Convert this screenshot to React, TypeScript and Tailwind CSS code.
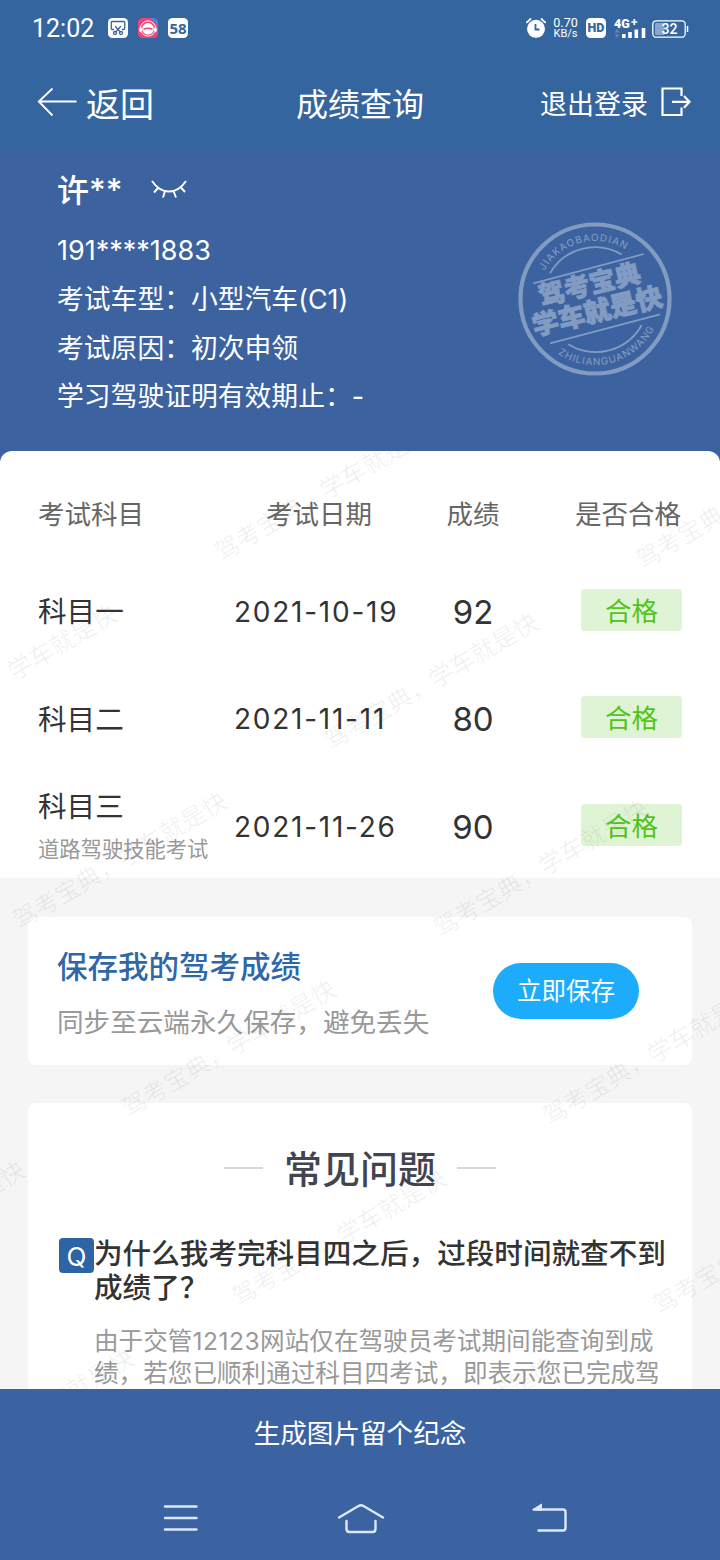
import React from "react";

const infoRows = ["考试车型：小型汽车(C1)", "考试原因：初次申领", "学习驾驶证明有效期止：-"];

const exams = [
  { subject: "科目一", note: "", date: "2021-10-19", score: "92", result: "合格" },
  { subject: "科目二", note: "", date: "2021-11-11", score: "80", result: "合格" },
  { subject: "科目三", note: "道路驾驶技能考试", date: "2021-11-26", score: "90", result: "合格" },
];

// centre of the first character of every watermark, relative to the content area
const marks = [
  [227, 97], [648, 105],
  [-85, 278], [336, 286],
  [25, 465], [446, 473],
  [134, 653], [555, 661],
  [-177, 834], [244, 842], [665, 850],
  [-68, 1022], [353, 1030],
];

const StatusBar = () => (
  <div className="h-[56px] flex items-center justify-between pl-8 pr-[31px] text-white">
    <div className="flex items-center">
      <span className="w-[76px] text-[25px] leading-none font-['Roboto']">12:02</span>
      <svg width="20" height="20" viewBox="0 0 20 20">
        <rect width="20" height="20" rx="4.5" fill="#fff" />
        <g fill="none" stroke="#35659f" strokeWidth="1.3">
          <path d="M6 11.5H4.2a.9.9 0 0 1-.9-.9V4.4a.9.9 0 0 1 .9-.9h11.6a.9.9 0 0 1 .9.9v6.2a.9.9 0 0 1-.9.9H14" />
          <path d="M7.2 8.3L12.3 14M12.8 8.3L7.7 14" />
          <circle cx="7" cy="15" r="1.5" />
          <circle cx="13" cy="15" r="1.5" />
        </g>
      </svg>
      <svg className="ml-[10px]" width="20" height="20" viewBox="0 0 20 20">
        <rect width="20" height="20" rx="4.5" fill="#ee4479" />
        <path d="M13 0h2.5A4.5 4.5 0 0 1 20 4.5V7z" fill="#2f8fe0" />
        <circle cx="10" cy="10.5" r="7.6" fill="none" stroke="#fff" strokeWidth="1" />
        <circle cx="10" cy="10.8" r="5.8" fill="#fff" />
        <path d="M5.5 11.2q4.5-1.8 9 0" fill="none" stroke="#ee4479" strokeWidth="1.5" />
        <rect x="1.2" y="9.5" width="2.8" height="4.5" rx="1.4" fill="#fff" />
        <rect x="16" y="9.5" width="2.8" height="4.5" rx="1.4" fill="#fff" />
      </svg>
      <span className="ml-[10px] w-5 h-5 flex items-center justify-center rounded-[4.5px] bg-white text-[#35659f] text-[15px] leading-5 font-bold font-['Noto_Sans']">58</span>
    </div>
    <div className="flex items-center">
      <svg width="20" height="20" viewBox="0 0 20 20">
        <circle cx="10" cy="10.8" r="9" fill="#fff" />
        <path d="M.8 4.3L4.5 1M19.2 4.3L15.5 1" stroke="#fff" strokeWidth="1.8" strokeLinecap="round" />
        <path d="M9.5 6v5.5h4" fill="none" stroke="#35659f" strokeWidth="1.8" />
      </svg>
      <div className="ml-[6px] w-[27px] text-[12.5px] leading-[11px] text-center font-['Roboto'] whitespace-nowrap">
        <div>0.70</div>
        <div className="text-[11px]">KB/s</div>
      </div>
      <span className="ml-[7px] w-5 h-5 flex items-center justify-center rounded-[4.5px] bg-white text-[#35659f] text-[12.5px] leading-5 font-black font-['Roboto']">HD</span>
      <svg className="ml-2" width="32" height="21" viewBox="0 0 32 21">
        <text x="0" y="10" fontSize="12.5" fontWeight="900" fill="#fff" fontFamily="Roboto">4G</text>
        <path d="M17.3 4h6M20.3 1v6" stroke="#fff" strokeWidth="1.7" />
        <path d="M.5 14.5L3 11l2.5 3.5zM.5 16.5L3 20l2.5-3.5z" fill="#6688b5" />
        <path d="M9.8 20v-4M16 20v-6M22.3 20v-8.5M29.5 20V10" stroke="#fff" strokeWidth="3.6" />
      </svg>
      <svg className="ml-[6px] mt-[1px]" width="37" height="18" viewBox="0 0 37 18">
        <rect x=".8" y=".8" width="32.4" height="16.4" rx="3.5" fill="none" stroke="#fff" strokeWidth="1.3" />
        <rect x="3" y="3" width="9.5" height="12" rx="1" fill="#8ba6ca" />
        <path d="M35.5 6v6" stroke="#fff" strokeWidth="1.5" />
        <text x="17.5" y="14" fontSize="14" fontWeight="500" textAnchor="middle" fill="#fff" fontFamily="Roboto">32</text>
      </svg>
    </div>
  </div>
);

const Header = () => (
  <header className="h-[93px] grid grid-cols-[1fr_auto_1fr] items-center px-[29px] text-white">
    <button className="pl-2 flex items-center">
      <svg className="-mt-[2px]" width="40" height="30" viewBox="0 0 40 30" fill="none" stroke="#fff" strokeWidth="1.8">
        <path d="M15.5 1.5L1.8 14.5L15.5 28.5M1.8 14.5H39.5" />
      </svg>
      <span className="mt-[4px] ml-[9px] text-[34px] leading-none">返回</span>
    </button>
    <h1 className="mt-[4px] text-[32px] leading-none font-normal">成绩查询</h1>
    <button className="flex items-center justify-end text-[27px] leading-none">
      <span className="mt-[4px]">退出登录</span>
      <svg className="ml-3 -mt-[2px]" width="31" height="30" viewBox="0 0 31 30" fill="none" stroke="#fff" strokeWidth="2.2">
        <path d="M21.5 9V1.5H2.5v26.5H21.5V20.5M12 14.8H29.5M24 9l5.5 5.8l-5.5 6" />
      </svg>
    </button>
  </header>
);

const Stamp = () => (
  <svg width="156" height="156" viewBox="0 0 156 156" opacity=".36" fontFamily="'Noto Sans CJK SC', sans-serif">
    <defs>
      <path id="stamp-top" d="M27.5 49.6A58 58 0 0 1 124.4 43.2" />
      <path id="stamp-bottom" d="M41 132.8A66 66 0 0 0 140.7 98.5" />
    </defs>
    <circle cx="78" cy="78" r="74.5" fill="none" stroke="#fff" strokeWidth="4.2" />
    <g fill="none" stroke="#fff" strokeWidth="1.8">
      <path d="M33 52.3A52 52 0 0 1 104.7 33.5" />
      <path d="M51.3 123.3A52.5 52.5 0 0 0 124.7 104" />
      <path d="M16.3 62.3L127 33M33 122.3L143 93.3" />
    </g>
    <g fill="#fff" fontSize="9.8" fontFamily="Inter, sans-serif">
      <text textLength="93"><textPath href="#stamp-top" textLength="93">JIAKAOBAODIAN</textPath></text>
      <text textLength="112"><textPath href="#stamp-bottom" textLength="112">ZHILIANGUANWANG</textPath></text>
    </g>
    <g fill="#fff" stroke="#fff" strokeWidth=".7" fontWeight="900" textAnchor="middle">
      <text transform="translate(72.5 63.3) rotate(-13.5)" y="9.5" fontSize="26">驾考宝典</text>
      <text transform="translate(80.2 90.2) rotate(-13.5)" y="9.5" fontSize="26.6">学车就是快</text>
    </g>
  </svg>
);

const Profile = () => (
  <section className="h-[302px] flex justify-between pl-[57px] pr-[47px] bg-[#3c63a0] text-white">
    <div className="pt-[22px]">
      <div className="flex items-center h-10">
        <span className="w-[94px] text-[32px] leading-10 font-medium">许**</span>
        <svg className="mb-[4px]" width="36" height="20" viewBox="0 0 36 20" fill="none" stroke="#fff" strokeWidth="1.9">
          <path d="M1 2Q8 12.5 18 12.5T35 2M7.5 8.5L3 13.5M14 12L12 18.5M22.5 12L25 18.5M29.5 8L34 13" />
        </svg>
      </div>
      <div className="mt-[15px] text-[27px] leading-[49px]">191****1883</div>
      {infoRows.map((row) => (
        <div key={row} className="text-[26.8px] leading-[48.5px]">{row}</div>
      ))}
    </div>
    <div className="pt-[72px]">
      <Stamp />
    </div>
  </section>
);

const ScoreTable = () => (
  <section className="h-[427px] rounded-t-[12px] bg-white">
    <div className="h-[107px] pt-[21px] flex items-center text-[26.5px] text-[#666]">
      <div className="w-[234px] pl-[38px]">考试科目</div>
      <div className="w-[170px] text-center">考试日期</div>
      <div className="w-[138px] text-center">成绩</div>
      <div className="flex-1 text-right pr-[39px]">是否合格</div>
    </div>
    {exams.map((exam) => (
      <div key={exam.subject} className="h-[107.5px] flex items-center text-[#333]">
        <div className="w-[234px] pl-[38px] pt-[1px]">
          <div className="text-[28.6px] leading-[40px]">{exam.subject}</div>
          {exam.note && <div className="pt-1 text-[21.3px] leading-[36px] text-[#999] whitespace-nowrap">{exam.note}</div>}
        </div>
        <div className="w-[170px] text-[28px] tracking-[1.75px] whitespace-nowrap">{exam.date}</div>
        <div className="w-[138px] pt-[1px] text-center text-[33px]">{exam.score}</div>
        <div className="flex-1 flex justify-end pr-[38px] pb-1">
          <span className="w-[101px] h-[42px] rounded bg-[#dff4d4] text-[26.5px] leading-[44px] text-center text-[#52c41a]">
            {exam.result}
          </span>
        </div>
      </div>
    ))}
  </section>
);

const SaveCard = () => (
  <section className="mx-[28px] mt-[39px] h-[148px] pl-[29px] pr-[53px] flex items-center justify-between rounded-lg bg-white">
    <div className="pt-[3px]">
      <h2 className="text-[30.5px] leading-[44px] font-medium text-[#2f67a8]">保存我的驾考成绩</h2>
      <p className="mt-[14px] text-[26.6px] leading-[38px] text-[#999]">同步至云端永久保存，避免丢失</p>
    </div>
    <button className="w-[146px] h-[56px] pt-[1px] rounded-full bg-[#1dacfc] text-[24.5px] text-white">立即保存</button>
  </section>
);

const Faq = () => (
  <section className="mx-[28px] mt-[38px] rounded-t-lg bg-white">
    <div className="pt-[38px] flex items-center justify-center gap-[21px]">
      <span className="-mt-[3px] w-[39px] h-[2px] bg-[#d6d8dc]" />
      <h2 className="text-[38px] leading-[56px] font-medium text-[#42454f]">常见问题</h2>
      <span className="-mt-[3px] w-[39px] h-[2px] bg-[#d6d8dc]" />
    </div>
    <div className="mt-[40px] pl-[31px] flex items-start">
      <span className="mt-[1px] w-[35px] h-[35px] rounded bg-[#2e64a6] text-white text-[26px] leading-[38px] text-center shrink-0">Q</span>
      <div className="w-[590px] shrink-0">
        <h3 className="text-[28.6px] leading-[33.5px] font-medium text-[#333] whitespace-nowrap">
          为什么我考完科目四之后，过段时间就查不到
          <br />
          成绩了？
        </h3>
        <p className="mt-[21px] text-[24.6px] leading-[32px] text-[#999] whitespace-nowrap">
          由于交管<span className="tracking-[0.5px]">12123</span>网站仅在驾驶员考试期间能查询到成
          <br />
          绩，若您已顺利通过科目四考试，即表示您已完成驾
        </p>
      </div>
    </div>
  </section>
);

const Watermark = () => (
  <svg className="absolute inset-0 pointer-events-none" width="720" height="938" fill="#000" fillOpacity=".06" fontSize="24.4" fontFamily="'Noto Sans CJK SC', sans-serif">
    {marks.map(([x, y]) => (
      <text key={`${x},${y}`} transform={`translate(${x} ${y}) rotate(-30.5)`} x="-12" y="9">
        驾考宝典，学车就是快
      </text>
    ))}
  </svg>
);

const BottomBar = () => (
  <footer className="h-[171px] bg-[#3b63a1] text-white">
    <button className="w-full h-[89px] pt-[1px] text-[26.6px]">生成图片留个纪念</button>
    <div className="h-[80px] flex items-center pl-[163px]">
      <svg width="35" height="28" viewBox="0 0 35 28" stroke="#dce8fb" strokeWidth="2.4" strokeLinecap="round">
        <path d="M2 2.5H33.5M2 14H33.5M2 25.5H33.5" />
      </svg>
      <svg className="ml-[139px]" width="48" height="32" viewBox="0 0 48 32" fill="none" stroke="#dce8fb" strokeWidth="2.4" strokeLinecap="round">
        <path d="M2 15.5L21.5 4Q24 2.5 26.5 4L46 15.5M9.5 19V27Q9.5 30 12.5 30H35.5Q38.5 30 38.5 27V19" />
      </svg>
      <svg className="ml-[147px]" width="35" height="30" viewBox="0 0 35 30" fill="none" stroke="#dce8fb" strokeWidth="2.4" strokeLinecap="round">
        <path d="M2 6.5H31Q33.5 6.5 33.5 9V25Q33.5 27.5 31 27.5H6.5" />
        <path d="M1 6.500L9.5 1V7z" fill="#dce8fb" strokeWidth="1" />
      </svg>
    </div>
  </footer>
);

export default function App() {
  return (
    <div className="w-[720px] h-[1560px] overflow-hidden flex flex-col bg-[#3c63a0] font-['Inter','Noto_Sans_CJK_SC',sans-serif]">
      <div className="bg-[#35659f]">
        <StatusBar />
        <Header />
      </div>
      <Profile />
      <main className="relative h-[938px] shrink-0 overflow-hidden">
        <div className="h-full bg-[linear-gradient(#3c63a0_40px,#f5f5f5_40px)]">
          <ScoreTable />
          <SaveCard />
          <Faq />
        </div>
        <Watermark />
      </main>
      <BottomBar />
    </div>
  );
}
